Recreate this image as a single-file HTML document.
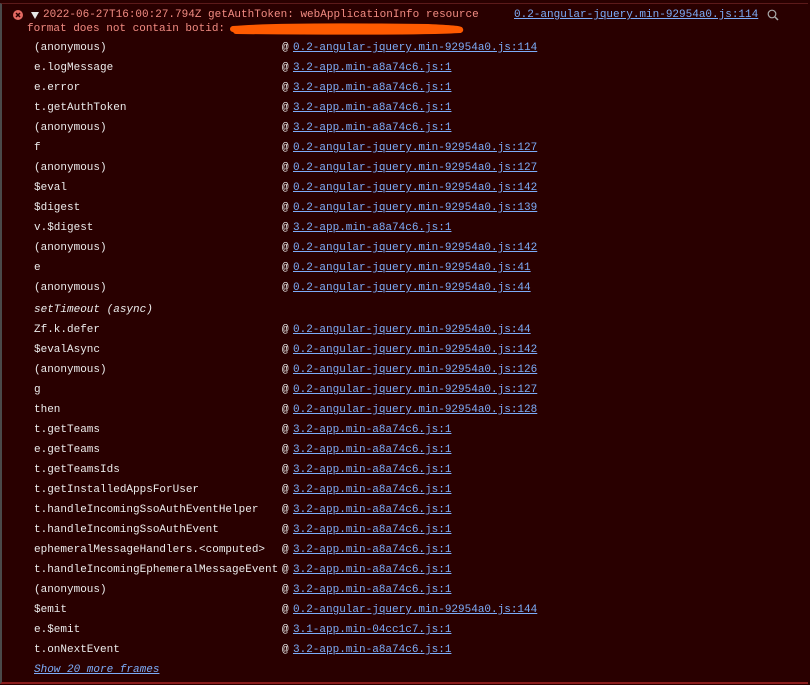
<!DOCTYPE html>
<html><head><meta charset="utf-8"><style>
body{margin:0;width:810px;height:685px;background:#290000;overflow:hidden;font-family:"Liberation Mono",monospace;font-size:11px;position:relative}
.frame{position:absolute;left:0;width:808px;border-top:1px solid #5c1a1a;border-left:2px solid #4a4a4a;border-bottom:2px solid #8a1c1c;top:3px;box-sizing:border-box;height:681px}
.h{position:absolute;color:#f28b82;white-space:pre;line-height:14px}
.rows{position:absolute;left:34px;top:38px}
.r{height:20px;line-height:20px;position:relative;color:#ececec;white-space:pre}
.r .a{position:absolute;left:248px;color:#ececec}
.r .l{position:absolute;left:259px;color:#7cacf8;text-decoration:underline}
.lk{color:#7cacf8;text-decoration:underline}
</style></head><body>
<div class="frame"></div>
<svg style="position:absolute;left:13px;top:10px" width="10" height="10"><circle cx="5" cy="5" r="5" fill="#e46962"/><path d="M3 3L7 7M7 3L3 7" stroke="#290000" stroke-width="1.5"/></svg>
<svg style="position:absolute;left:31px;top:12px" width="8" height="7"><path d="M0 0H8L4 7Z" fill="#e6e6e6"/></svg>
<div class="h" style="left:43px;top:8px">2022-06-27T16:00:27.794Z getAuthToken: webApplicationInfo resource</div>
<div class="h" style="left:27px;top:22px">format does not contain botid: </div>
<svg style="position:absolute;left:228px;top:21px" width="245" height="16"><path d="M5 8C40 5 120 5 200 6C222 7 234 8 232 9C200 11 100 11 8 10" stroke="#ff5a00" stroke-width="6" fill="none" stroke-linecap="round"/></svg>
<div class="h" style="left:514px;top:8px"><span class="lk">0.2-angular-jquery.min-92954a0.js:114</span></div>
<svg style="position:absolute;left:767px;top:9px" width="12" height="12"><circle cx="5" cy="5" r="3.8" stroke="#aaa" stroke-width="1.2" fill="none"/><path d="M8 8L11 11" stroke="#aaa" stroke-width="1.5"/></svg>
<div class="rows">
<div class="r">(anonymous)<span class="a">@</span><span class="l">0.2-angular-jquery.min-92954a0.js:114</span></div>
<div class="r">e.logMessage<span class="a">@</span><span class="l">3.2-app.min-a8a74c6.js:1</span></div>
<div class="r">e.error<span class="a">@</span><span class="l">3.2-app.min-a8a74c6.js:1</span></div>
<div class="r">t.getAuthToken<span class="a">@</span><span class="l">3.2-app.min-a8a74c6.js:1</span></div>
<div class="r">(anonymous)<span class="a">@</span><span class="l">3.2-app.min-a8a74c6.js:1</span></div>
<div class="r">f<span class="a">@</span><span class="l">0.2-angular-jquery.min-92954a0.js:127</span></div>
<div class="r">(anonymous)<span class="a">@</span><span class="l">0.2-angular-jquery.min-92954a0.js:127</span></div>
<div class="r">$eval<span class="a">@</span><span class="l">0.2-angular-jquery.min-92954a0.js:142</span></div>
<div class="r">$digest<span class="a">@</span><span class="l">0.2-angular-jquery.min-92954a0.js:139</span></div>
<div class="r">v.$digest<span class="a">@</span><span class="l">3.2-app.min-a8a74c6.js:1</span></div>
<div class="r">(anonymous)<span class="a">@</span><span class="l">0.2-angular-jquery.min-92954a0.js:142</span></div>
<div class="r">e<span class="a">@</span><span class="l">0.2-angular-jquery.min-92954a0.js:41</span></div>
<div class="r">(anonymous)<span class="a">@</span><span class="l">0.2-angular-jquery.min-92954a0.js:44</span></div>
<div class="r" style="height:22px;line-height:24px;font-style:italic">setTimeout (async)</div>
<div class="r">Zf.k.defer<span class="a">@</span><span class="l">0.2-angular-jquery.min-92954a0.js:44</span></div>
<div class="r">$evalAsync<span class="a">@</span><span class="l">0.2-angular-jquery.min-92954a0.js:142</span></div>
<div class="r">(anonymous)<span class="a">@</span><span class="l">0.2-angular-jquery.min-92954a0.js:126</span></div>
<div class="r">g<span class="a">@</span><span class="l">0.2-angular-jquery.min-92954a0.js:127</span></div>
<div class="r">then<span class="a">@</span><span class="l">0.2-angular-jquery.min-92954a0.js:128</span></div>
<div class="r">t.getTeams<span class="a">@</span><span class="l">3.2-app.min-a8a74c6.js:1</span></div>
<div class="r">e.getTeams<span class="a">@</span><span class="l">3.2-app.min-a8a74c6.js:1</span></div>
<div class="r">t.getTeamsIds<span class="a">@</span><span class="l">3.2-app.min-a8a74c6.js:1</span></div>
<div class="r">t.getInstalledAppsForUser<span class="a">@</span><span class="l">3.2-app.min-a8a74c6.js:1</span></div>
<div class="r">t.handleIncomingSsoAuthEventHelper<span class="a">@</span><span class="l">3.2-app.min-a8a74c6.js:1</span></div>
<div class="r">t.handleIncomingSsoAuthEvent<span class="a">@</span><span class="l">3.2-app.min-a8a74c6.js:1</span></div>
<div class="r">ephemeralMessageHandlers.&lt;computed&gt;<span class="a">@</span><span class="l">3.2-app.min-a8a74c6.js:1</span></div>
<div class="r">t.handleIncomingEphemeralMessageEvent<span class="a">@</span><span class="l">3.2-app.min-a8a74c6.js:1</span></div>
<div class="r">(anonymous)<span class="a">@</span><span class="l">3.2-app.min-a8a74c6.js:1</span></div>
<div class="r">$emit<span class="a">@</span><span class="l">0.2-angular-jquery.min-92954a0.js:144</span></div>
<div class="r">e.$emit<span class="a">@</span><span class="l">3.1-app.min-04cc1c7.js:1</span></div>
<div class="r">t.onNextEvent<span class="a">@</span><span class="l">3.2-app.min-a8a74c6.js:1</span></div>
<div class="r"><span class="lk" style="font-style:italic">Show 20 more frames</span></div>
</div>
</body></html>
